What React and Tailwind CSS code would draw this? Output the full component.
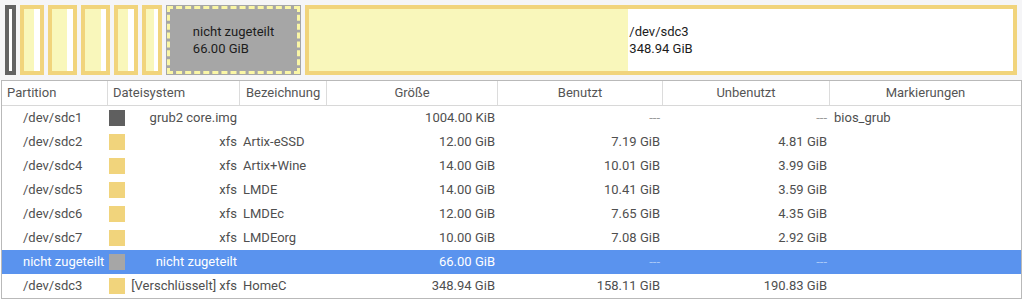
import React from "react";

const cols = [
  { w: "w-[106px]" },
  { w: "w-[132px]" },
  { w: "w-[87px]" },
  { w: "w-[171px]" },
  { w: "w-[165px]" },
  { w: "w-[167px]" },
  { w: "w-[191px]" },
];

const rows = [
  { p: "/dev/sdc1", c: "bg-[#5f5f5f]", fs: "grub2 core.img", l: "", s: "1004.00 KiB", u: "---", f: "---", m: "bios_grub" },
  { p: "/dev/sdc2", c: "bg-[#f1d47c]", fs: "xfs", l: "Artix-eSSD", s: "12.00 GiB", u: "7.19 GiB", f: "4.81 GiB", m: "" },
  { p: "/dev/sdc4", c: "bg-[#f1d47c]", fs: "xfs", l: "Artix+Wine", s: "14.00 GiB", u: "10.01 GiB", f: "3.99 GiB", m: "" },
  { p: "/dev/sdc5", c: "bg-[#f1d47c]", fs: "xfs", l: "LMDE", s: "14.00 GiB", u: "10.41 GiB", f: "3.59 GiB", m: "" },
  { p: "/dev/sdc6", c: "bg-[#f1d47c]", fs: "xfs", l: "LMDEc", s: "12.00 GiB", u: "7.65 GiB", f: "4.35 GiB", m: "" },
  { p: "/dev/sdc7", c: "bg-[#f1d47c]", fs: "xfs", l: "LMDEorg", s: "10.00 GiB", u: "7.08 GiB", f: "2.92 GiB", m: "" },
  { p: "nicht zugeteilt", c: "bg-[#a6a6a6]", fs: "nicht zugeteilt", l: "", s: "66.00 GiB", u: "---", f: "---", m: "", sel: true },
  { p: "/dev/sdc3", c: "bg-[#f1d47c]", fs: "[Verschlüsselt] xfs", l: "HomeC", s: "348.94 GiB", u: "158.11 GiB", f: "190.83 GiB", m: "" },
];

function Part({ w, used, label, size, dark }) {
  return (
    <div className={`relative h-[70px] shrink-0 border-4 ${dark ? "border-[#636363]" : "border-[#f1d47c]"} ${w} flex`}>
      {used ? <div className={`${used} h-full bg-[#f9f7bb]`} /> : null}
      <div className="flex-1 h-full bg-white" />
      {label ? (
        <div className="absolute inset-0 flex items-center justify-center">
          <div className="text-[13px] leading-[17px] text-[#1c1c1c]">
            <div>{label}</div>
            <div>{size}</div>
          </div>
        </div>
      ) : null}
    </div>
  );
}

export default function App() {
  return (
    <div className="w-[1022px] h-[299px] bg-white overflow-hidden" style={{ fontFamily: "Roboto, 'Liberation Sans', sans-serif" }}>
      <div className="h-[80px] bg-[#f5f5f7] flex items-center gap-[4px] px-[5px]">
        <Part w="w-[11px]" dark />
        <Part w="w-[24px]" used="w-[10px]" />
        <Part w="w-[29px]" used="w-[15px]" />
        <Part w="w-[29px]" used="w-[16px]" />
        <Part w="w-[24px]" used="w-[10px]" />
        <Part w="w-[20px]" used="w-[8px]" />
        <div className="relative h-[70px] w-[135px] shrink-0 bg-[#a6a6a6] p-[1px]">
          <div className="h-full w-full border-[3px] border-dashed border-[#faf6a6]" />
          <div className="absolute inset-0 flex items-center justify-center">
            <div className="text-[13px] leading-[17px] text-[#1c1c1c]">
              <div>nicht zugeteilt</div>
              <div>66.00 GiB</div>
            </div>
          </div>
        </div>
        <Part w="w-[712px]" used="w-[319px]" label="/dev/sdc3" size="348.94 GiB" />
      </div>
      <div className="ml-[1px] w-[1021px] h-[219px] border border-[#b9b9b9] text-[13px] text-[#4f4f4f]">
        <div className="flex h-[25px] border-b border-[#d8d8d8] text-[#555]">
          <div className={`${cols[0].w} border-r border-[#dcdcdc] pl-[5px] flex items-center`}>Partition</div>
          <div className={`${cols[1].w} border-r border-[#dcdcdc] pl-[5px] flex items-center`}>Dateisystem</div>
          <div className={`${cols[2].w} border-r border-[#dcdcdc] pl-[6px] flex items-center`}>Bezeichnung</div>
          <div className={`${cols[3].w} border-r border-[#dcdcdc] flex items-center justify-center`}>Größe</div>
          <div className={`${cols[4].w} border-r border-[#dcdcdc] flex items-center justify-center`}>Benutzt</div>
          <div className={`${cols[5].w} border-r border-[#dcdcdc] flex items-center justify-center`}>Unbenutzt</div>
          <div className={`${cols[6].w} flex items-center justify-center`}>Markierungen</div>
        </div>
        {rows.map((r, i) => {
          const dash = r.sel ? "text-[#a9c8f7]" : "text-[#9a9a9a]";
          return (
            <div key={i} className={`flex h-[24px] items-center ${r.sel ? "bg-[#5a93ee] text-white" : ""}`}>
              <div className={`${cols[0].w} pl-[21px] whitespace-nowrap`}>{r.p}</div>
              <div className={`${cols[1].w} flex items-center pl-[1px] pr-[3px]`}>
                <div className={`w-[16px] h-[16px] shrink-0 ${r.c}`} />
                <div className="flex-1 text-right whitespace-nowrap">{r.fs}</div>
              </div>
              <div className={`${cols[2].w} pl-[3px] whitespace-nowrap`}>{r.l}</div>
              <div className={`${cols[3].w} pr-[3px] text-right`}>{r.s}</div>
              <div className={`${cols[4].w} pr-[3px] text-right ${r.u === "---" ? dash : ""}`}>{r.u}</div>
              <div className={`${cols[5].w} pr-[3px] text-right ${r.f === "---" ? dash : ""}`}>{r.f}</div>
              <div className={`${cols[6].w} pl-[4px]`}>{r.m}</div>
            </div>
          );
        })}
      </div>
    </div>
  );
}
